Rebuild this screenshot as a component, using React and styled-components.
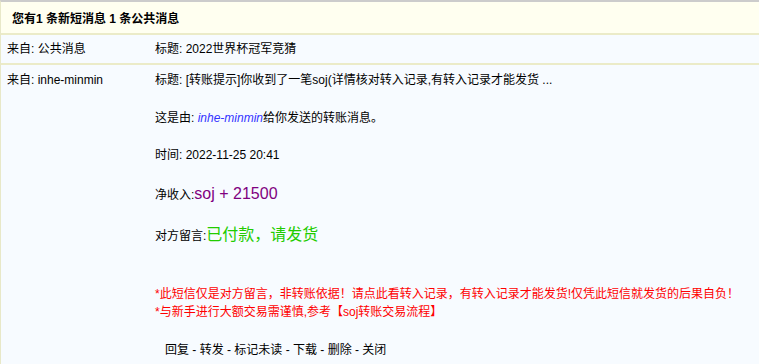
import styled, { createGlobalStyle } from "styled-components";

const GlobalStyle = createGlobalStyle`
  html, body {
    margin: 0;
    padding: 0;
    background: #f7fbff;
  }
  body {
    font-family: "Liberation Sans", "Noto Sans CJK SC", sans-serif;
    font-size: 12px;
    color: #000;
  }
`;

const Box = styled.div`
  border-top: 2px solid #cccccc;
  border-left: 1px solid #e8e8c8;
  min-height: 362px;
  background: #f7fbff;
`;

const Header = styled.div`
  background: #fffff0;
  height: 31px;
  display: flex;
  align-items: center;
  padding-left: 11px;
  font-weight: bold;
  border-bottom: 2px solid #ebebc8;
`;

const Row = styled.div`
  display: grid;
  grid-template-columns: 154px 1fr;
  padding: ${(p) => (p.$first ? "5px 0" : "6px 0")};
  border-bottom: ${(p) => (p.$first ? "2px solid #ebebc8" : "none")};
  line-height: 18px;
`;

const From = styled.div`
  padding-left: 6px;
`;

const Content = styled.div`
  display: flex;
  flex-direction: column;
`;

const Line = styled.div`
  margin-top: ${(p) => p.$gap || 0}px;
  line-height: ${(p) => (p.$big ? 22 : 18)}px;
  color: ${(p) => p.$color || "#000"};
  padding-left: ${(p) => p.$indent || 0}px;
  white-space: nowrap;
`;

const Sender = styled.i`
  color: #3333ff;
`;

const Big = styled.span`
  font-size: 16px;
  color: ${(p) => p.$color};
`;

export default function App() {
  return (
    <>
      <GlobalStyle />
      <Box>
        <Header>您有1 条新短消息 1 条公共消息</Header>
        <Row $first>
          <From>来自: 公共消息</From>
          <Content>
            <Line>标题: 2022世界杯冠军竞猜</Line>
          </Content>
        </Row>
        <Row>
          <From>来自: inhe-minmin</From>
          <Content>
            <Line>标题: [转账提示]你收到了一笔soj(详情核对转入记录,有转入记录才能发货 ...</Line>
            <Line $gap={20}>
              这是由: <Sender>inhe-minmin</Sender>给你发送的转账消息。
            </Line>
            <Line $gap={19}>时间: 2022-11-25 20:41</Line>
            <Line $gap={19} $big>
              净收入:<Big $color="#800080">soj + 21500</Big>
            </Line>
            <Line $gap={18} $big>
              对方留言:<Big $color="#22cc00">已付款，请发货</Big>
            </Line>
            <Line $gap={38} $color="#ff0000">
              *此短信仅是对方留言，非转账依据！请点此看转入记录，有转入记录才能发货!仅凭此短信就发货的后果自负！
            </Line>
            <Line $color="#ff0000">*与新手进行大额交易需谨慎,参考【soj转账交易流程】</Line>
            <Line $gap={20} $indent={10}>
              回复 - 转发 - 标记未读 - 下载 - 删除 - 关闭
            </Line>
          </Content>
        </Row>
      </Box>
    </>
  );
}
